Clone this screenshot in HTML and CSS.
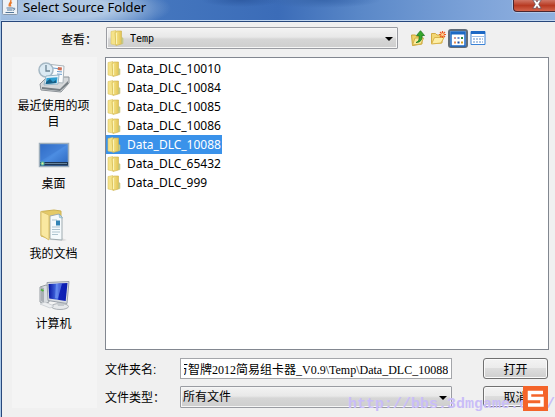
FILE: index.html
```html
<!DOCTYPE html>
<html lang="zh-CN">
<head>
    <meta charset="UTF-8">
    <meta name="viewport" content="width=device-width, initial-scale=1.0">
    <title>Select Source Folder</title>
    <link rel="stylesheet" href="styles.css">
</head>
<body>
    <svg class="defs" aria-hidden="true">
        <defs>
            <linearGradient id="gold" x1="0" x2="1">
                <stop offset="0" stop-color="#f9e990"/>
                <stop offset="1" stop-color="#e2c455"/>
            </linearGradient>
            <linearGradient id="screen" x1="0" y1="0" x2="1" y2="1">
                <stop offset="0" stop-color="#2460bc"/>
                <stop offset="0.5" stop-color="#4c8de2"/>
                <stop offset="1" stop-color="#2a64bc"/>
            </linearGradient>
            <linearGradient id="monitor" x1="0" x2="1">
                <stop offset="0" stop-color="#0714a0"/>
                <stop offset="0.45" stop-color="#4b74e8"/>
                <stop offset="0.55" stop-color="#1024b8"/>
                <stop offset="1" stop-color="#0a1cb0"/>
            </linearGradient>
        </defs>
        <symbol id="folder" viewBox="0 0 14 16">
            <path d="M1 1.500 6 .5V15l-5-1z" fill="#f5e389" stroke="#dcc66a" stroke-width=".6"/>
            <path d="M5 2.500 7 1h4.500v13L6 15.500z" fill="url(#gold)" stroke="#cdb04a" stroke-width=".6"/>
            <path d="M6.500 3v11" stroke="#fbf3b8"/>
            <path d="M11.500 7.500 13 8v5.500l-1.500.5z" fill="#b9cf9c" stroke="#d1bd5c" stroke-width=".5"/>
        </symbol>
    </svg>

    <div class="dialog">
        <div class="titlebar">
            <svg class="java" viewBox="0 0 16 15" aria-hidden="true">
                <rect x=".5" y="-2" width="15" height="16.500" rx="1" fill="#eef2f6" stroke="#8999ac"/>
                <path d="M8.500 0c2 2-3 3.500-1 6.500M10 2.500C7.500 4 8 5 9 6.500" fill="none" stroke="#e8782a" stroke-width="1.300"/>
                <path d="M4.500 8h6.500M5 10h5.500M3.500 12.500h8.500M11 8.300c2.500-.8 2.500 1.500 0 2" fill="none" stroke="#54789c"/>
            </svg>
            <span class="title">Select Source Folder</span>
            <button class="close" aria-label="关闭">
                <svg viewBox="0 0 12 12" aria-hidden="true"><path d="M1 0h3.500L6 2.500 7.500 0H11L8 5l3 5H7.500L6 7.500 4.500 10H1l3-5z" fill="#fff" stroke="#5c4a54" stroke-width=".8"/></svg>
            </button>
        </div>

        <div class="content">
            <div class="lookin">
                <label for="look">查看：</label>
                <div class="combo with-icon">
                    <svg class="combo-icon" aria-hidden="true"><use href="#folder"/></svg>
                    <select id="look"><option>Temp</option></select>
                </div>
                <div class="tools">
                    <button aria-label="向上一级">
                        <svg viewBox="0 0 16 16"><path d="M1.500 5h4l1 1.500H12V14l-9.500 1.500z" fill="#f0d266" stroke="#c9a53a"/><path d="m2.500 15 2.500-7h8.500L11 14z" fill="#fbeb9a" stroke="#d3b04a"/><path d="M6 12.500c3-1 3.500-3.500 3-7H6.500L10.500.7l4 4.800H12c.5 4-1.500 7-6 7z" fill="#35a82b" stroke="#1d7620" stroke-width=".8"/></svg>
                    </button>
                    <button aria-label="新建文件夹">
                        <svg viewBox="0 0 16 16"><path d="M1.500 13.500v-10h4L7 5h5v8z" fill="#f3d774" stroke="#d1ab44"/><path d="m1.500 14 3-6.500h9.500L11 13z" fill="#fdeea5" stroke="#d9b44c"/><path d="m12.500 1v7M9 4.500h7M10 2l5 5M15 2l-5 5" stroke="#ee5a20" stroke-width="1.200"/><circle cx="12.500" cy="4.500" r="1.500" fill="#ffd08a"/></svg>
                    </button>
                    <button class="pressed" aria-label="列表">
                        <svg viewBox="0 0 16 16"><path d="M1 1h14v14H1z" fill="#fff" stroke="#1c68c4" stroke-width="1.500"/><path d="M1 1h14v2.500H1z" fill="#1c68c4"/><path d="M4 6h2v2H4z" fill="#d19a9a"/><path d="M7.500 6h2v2h-2z" fill="#6a8fd0"/><path d="M11 6h2v2h-2z" fill="#2d8a4a"/><path d="M4 10.500h2v2H4z" fill="#e88a50"/><path d="M7.500 10.500h2v2h-2z" fill="#184a9a"/><path d="M11 10.500h2v2h-2z" fill="#d8a022"/></svg>
                    </button>
                    <button aria-label="详细信息">
                        <svg viewBox="0 0 16 16"><path d="M1 1.500h14v13H1z" fill="#fff" stroke="#3a82d6"/><path d="M1 1h14v3H1z" fill="#1c68c4"/><path d="M2 6.500h12" stroke="#9fc0e8"/><path d="M3 9h10M3 12h10" stroke="#5d8cc8" stroke-dasharray="2 1"/></svg>
                    </button>
                </div>
            </div>

            <div class="places">
                <button>
                    <svg viewBox="0 0 32 32">
                        <path d="m2 23 7-7h22v6l-8 9-20-2z" fill="#d5d8da" stroke="#8c9398"/><path d="m4 26 18 2 8-8v3l-8 7-18-2z" fill="#777f84"/>
                        <path d="M13 3.500 26 5l-1 17-13-1z" fill="#fafcfd" stroke="#aab4ba"/><path d="m15 7 8 1M19 10.500l5 .4M19 13l5 .4" stroke="#6c9dcc"/><path d="m20 6 4 .4-.4 3-4-.4z" fill="#cf6f55"/>
                        <circle cx="8" cy="9" r="7" fill="#dbeaf3" stroke="#a5b8c4" stroke-width="1.500"/><path d="M8 4v6h4" fill="none" stroke="#6c8494" stroke-width="1.300"/>
                        <path d="m8 15 13-1-1 9-14 1z" fill="#e8f5fc" stroke="#98b5c6"/><path d="m8.500 17 11-.8-.7 5.800-11 1z" fill="#2f9ed0"/><path d="m8 21 4-3 3 3 3-2v3l-10.500 1z" fill="#176087"/>
                    </svg>
                    <span>最近使用的项目</span>
                </button>
                <button>
                    <svg viewBox="0 0 32 32">
                        <path d="M1.500 4.500h29v23h-29z" fill="url(#screen)" stroke="#9eaebb" stroke-width="1.500"/><path d="M2.500 5.500h27L2.500 22z" fill="#3b78d0" opacity=".5"/><path d="M2 23h28v3.500H2z" fill="#1d3552"/><path d="M7 24.500h22" stroke="#66839b"/><circle cx="4.500" cy="24.500" r="2.200" fill="#55b4a6"/><circle cx="4.500" cy="24.500" r="1" fill="#e6ef92"/>
                    </svg>
                    <span>桌面</span>
                </button>
                <button>
                    <svg viewBox="0 0 32 32">
                        <path d="M18 27 29 31l-4 1-13-1z" fill="#dedede"/><path d="M3 2.500 16 1l7 1v25L9 29l-6-2z" fill="#e4ca67" stroke="#ccb153"/>
                        <path d="m12 7 9-2 3 3v23l-12-1z" fill="#f5fafc" stroke="#9fabb0"/><path d="m21 5 .5 3.500 3 .5z" fill="#c7e2ee" stroke="#77a8bd" stroke-width=".6"/><path d="M14 11h5M14 18h8M14 20.500h8M14 23h8M14 25.500h6" stroke="#adc4cf"/><path d="M18 11.500h4v5h-4z" fill="#3384b5"/>
                        <path d="m3 2.500 8 3.500v25l-8-5z" fill="#f9e8a0" stroke="#dac06a"/>
                    </svg>
                    <span>我的文档</span>
                </button>
                <button>
                    <svg viewBox="0 0 32 32">
                        <path d="m2 8 6-2 3 1v16l-5 2-4-2z" fill="#d9dde0" stroke="#969ca2"/><path d="m6 9-3-1v14l3 2z" fill="#a9aeb4"/><path d="M3 10.500 5.500 12" stroke="#52b43d" stroke-width="2"/>
                        <ellipse cx="22" cy="27.500" rx="8.500" ry="3" fill="#e7e9eb" stroke="#aaafb4"/><path d="m18 21 8 1v5h-6z" fill="#c5cace"/>
                        <path d="m9 3.500 22-1-2 22-19-3z" fill="#d9dde2" stroke="#9ba1aa"/><path d="m10.500 5 19-1-1.800 18-16.500-2.500z" fill="url(#monitor)"/><path d="m18 5 6-.4-4 15-3-.5z" fill="#789cf5" opacity=".6"/>
                        <path d="m2 25 5-2 9 4-4 2z" fill="#eceef0" stroke="#babfc4" stroke-width=".6"/>
                    </svg>
                    <span>计算机</span>
                </button>
            </div>

            <ul class="files" role="listbox" aria-label="文件夹">
                <li role="option"><svg><use href="#folder"/></svg>Data_DLC_10010</li>
                <li role="option"><svg><use href="#folder"/></svg>Data_DLC_10084</li>
                <li role="option"><svg><use href="#folder"/></svg>Data_DLC_10085</li>
                <li role="option"><svg><use href="#folder"/></svg>Data_DLC_10086</li>
                <li role="option" class="selected" aria-selected="true"><svg><use href="#folder"/></svg>Data_DLC_10088</li>
                <li role="option"><svg><use href="#folder"/></svg>Data_DLC_65432</li>
                <li role="option"><svg><use href="#folder"/></svg>Data_DLC_999</li>
            </ul>

            <div class="fields">
                <label for="folder-name">文件夹名:</label>
                <input type="text" id="folder-name" value="万智牌2012简易组卡器_V0.9\Temp\Data_DLC_10088">
                <button class="action">打开</button>
                <label for="file-type">文件类型：</label>
                <div class="combo">
                    <select id="file-type"><option>所有文件</option></select>
                </div>
                <button class="action">取消</button>
            </div>
        </div>

        <div class="watermark">http://bbs.3dmgame.com/</div>
        <svg class="badge" viewBox="0 0 25 25" aria-hidden="true">
            <path d="M0 0h25v25H0z" fill="#f4642a"/>
            <path d="M20 6.500H6.500v6H19v6.500H5" fill="none" stroke="#fff" stroke-width="3.500"/>
        </svg>
    </div>

    <script>
        // keep the end of a long path in view
        const nameBox = document.getElementById("folder-name");
        nameBox.scrollLeft = nameBox.scrollWidth;
    </script>
</body>
</html>
```
FILE: styles.css
```css
* {
    box-sizing: border-box;
}
body {
    margin: 0;
    font-family: "Liberation Sans", "Noto Sans CJK SC", sans-serif;
    font-size: 12px;
    color: #000;
}
button, input, select {
    font: inherit;
    color: inherit;
    margin: 0;
}
svg {
    display: block;
    flex: none;
}
.defs {
    position: absolute;
    width: 0;
    height: 0;
}
.dialog {
    position: relative;
    display: flex;
    flex-direction: column;
    height: 100vh;
    min-height: 400px;
    overflow: hidden;
    background: #f0f0f0;
    border-left: 1px solid #a9c8e8;
}

/* title bar */
.titlebar {
    display: flex;
    align-items: flex-start;
    height: 21px;
    padding-left: 1px;
    border-bottom: 1px solid #c0d6f0;
    background:
        radial-gradient(ellipse 100px 24px at 70px 8px, #b0c8e4 40%, transparent),
        radial-gradient(ellipse 40px 7px at 240px 0, #2f5ca4, transparent),
        radial-gradient(ellipse 60px 8px at 320px 0, #3967ac, transparent),
        linear-gradient(90deg, #98b8de, #4476be 28%, #3b6cb8 50%, #5a88c8 65%, #7ca2d8 85%, #92b2e0);
}
.java {
    width: 16px;
    height: 15px;
}
.title {
    flex: 1;
    padding-left: 5px;
    font-family: "Noto Sans", sans-serif;
    font-size: 13px;
    line-height: 14px;
}
.close {
    display: flex;
    justify-content: center;
    width: 42px;
    height: 12px;
    padding: 0 0 0 5px;
    border: 1px solid #4a2630;
    border-width: 0 0 1px 1px;
    border-radius: 0 0 0 4px;
    background: linear-gradient(#cf7565, #b83a22 50%, #d2644c);
    box-shadow: 0 0 0 1px #b0c6e6;
}
.close svg {
    width: 12px;
    height: 10px;
}

/* dialog body */
.content {
    flex: 1;
    min-height: 0;
    display: grid;
    grid-template-columns: 85px 1fr;
    grid-template-rows: 22px 1fr 50px;
    gap: 8px;
    padding: 5px 6px 9px 10px;
    border: 1px solid #28487c;
    border-width: 1px 0 0 1px;
}
.lookin {
    grid-column: 1 / -1;
    display: flex;
    align-items: center;
}
.lookin label {
    width: 94px;
    padding-left: 49px;
    white-space: nowrap;
}
.combo {
    position: relative;
    flex: 1;
    min-width: 0;
}
.combo::after {
    content: "";
    position: absolute;
    right: 5px;
    top: 10px;
    border: 4px solid transparent;
    border-top: 4px solid #000;
    border-bottom: 0;
    pointer-events: none;
}
.combo select {
    display: block;
    width: 100%;
    height: 22px;
    padding: 0 16px 0 2px;
    appearance: none;
    border: 1px solid #9a9ca2;
    border-radius: 1px;
    background: linear-gradient(#f3f3f3, #e8e8e8 45%, #d6d6d6 55%, #cecece);
    box-shadow: inset 0 0 0 1px #f6f6f6;
}
.with-icon select {
    padding-left: 23px;
    font-family: "DejaVu Sans Mono", monospace;
    font-size: 10px;
}
.combo-icon {
    position: absolute;
    left: 4px;
    top: 3px;
    width: 14px;
    height: 16px;
}
.tools {
    display: flex;
    align-items: center;
    padding: 0 61px 0 10px;
}
.tools button {
    display: grid;
    place-items: center;
    width: 20px;
    height: 19px;
    padding: 0;
    border: 0;
    background: none;
}
.tools svg {
    width: 16px;
    height: 16px;
}
.tools .pressed {
    border: 2px solid #5f6b78;
    border-radius: 3px;
    background: #bfd0e0;
}

/* shortcuts on the left */
.places {
    grid-row: 2 / 4;
    padding-top: 3px;
    background: #f4f4f4;
}
.places button {
    display: flex;
    flex-direction: column;
    align-items: center;
    justify-content: center;
    gap: 5px;
    width: 100%;
    min-height: 70px;
    padding: 0 6px 0 4px;
    border: 0;
    background: none;
    line-height: 16px;
}
.places svg {
    width: 32px;
    height: 32px;
}

/* folder list */
.files {
    margin: 0;
    padding: 1px 0;
    list-style: none;
    overflow: hidden;
    background: #fff;
    border: 1px solid #828790;
    font-family: "Noto Sans", sans-serif;
}
.files li {
    display: flex;
    align-items: center;
    gap: 6px;
    width: max-content;
    height: 19px;
    padding: 0 1px;
}
.files svg {
    width: 14px;
    height: 16px;
}
.files .selected {
    background: #3a92ea;
    color: #fff;
}

/* name and type */
.fields {
    display: grid;
    grid-template-columns: 75px 1fr 66px;
    grid-auto-rows: 21px;
    row-gap: 7px;
    align-items: center;
}
.fields input {
    min-width: 0;
    height: 21px;
    padding: 0 3px;
    border: 1px solid #a4a6aa;
    background: #fff;
    font-family: "Liberation Serif", "Noto Sans CJK SC", serif;
}
.fields input, .fields .combo {
    width: calc(100% - 31px);
}
.action {
    width: 65px;
    height: 21px;
    padding: 0;
    border: 1px solid #707070;
    border-radius: 3px;
    background: linear-gradient(#f3f3f3, #ebebeb 50%, #dddddd 50%, #cfcfcf);
    box-shadow: inset 0 0 0 1px #fafafa;
}

.watermark {
    position: absolute;
    right: 0;
    bottom: 4px;
    color: #c9bdf8;
    font: bold 15px "Liberation Mono", monospace;
    pointer-events: none;
}
.badge {
    position: absolute;
    right: 7px;
    bottom: 6px;
    width: 25px;
    height: 25px;
}
```
